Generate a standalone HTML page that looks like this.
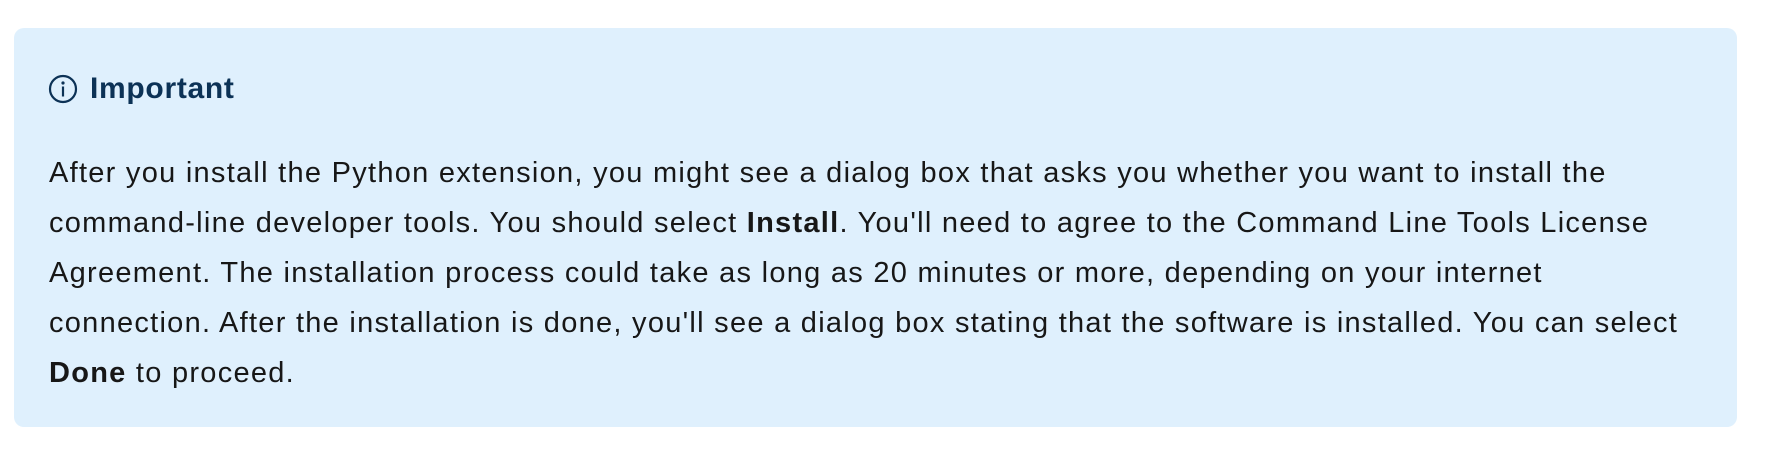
<!DOCTYPE html>
<html><head><style>
html,body{margin:0;padding:0;background:#fff;width:1774px;height:454px;overflow:hidden}
.box{position:absolute;left:14px;top:28px;width:1723px;height:399px;background:#dff0fd;border-radius:10px}
.h{position:absolute;left:48px;top:71px;height:36px;display:flex;align-items:center;color:#0c3256;font:bold 30px "Liberation Sans",sans-serif;letter-spacing:0.7px}
.h svg{margin-right:12px}
.t{position:absolute;left:49px;top:148px;color:#171717;font:29px/50px "Liberation Sans",sans-serif;white-space:nowrap;letter-spacing:1.27px}
</style></head><body>
<div class="box"></div>
<div class="h"><svg width="30" height="30" viewBox="0 0 30 30"><circle cx="15" cy="15" r="13" fill="none" stroke="#0c3256" stroke-width="2.2"/><circle cx="15" cy="9" r="1.6" fill="#0c3256"/><rect x="13.9" y="12.5" width="2.2" height="10" fill="#0c3256"/></svg>Important</div>
<div class="t">After you install the Python extension, you might see a dialog box that asks you whether you want to install the<br>command-line developer tools. You should select <b>Install</b>. You'll need to agree to the Command Line Tools License<br>Agreement. The installation process could take as long as 20 minutes or more, depending on your internet<br>connection. After the installation is done, you'll see a dialog box stating that the software is installed. You can select<br><b>Done</b> to proceed.</div>
</body></html>
